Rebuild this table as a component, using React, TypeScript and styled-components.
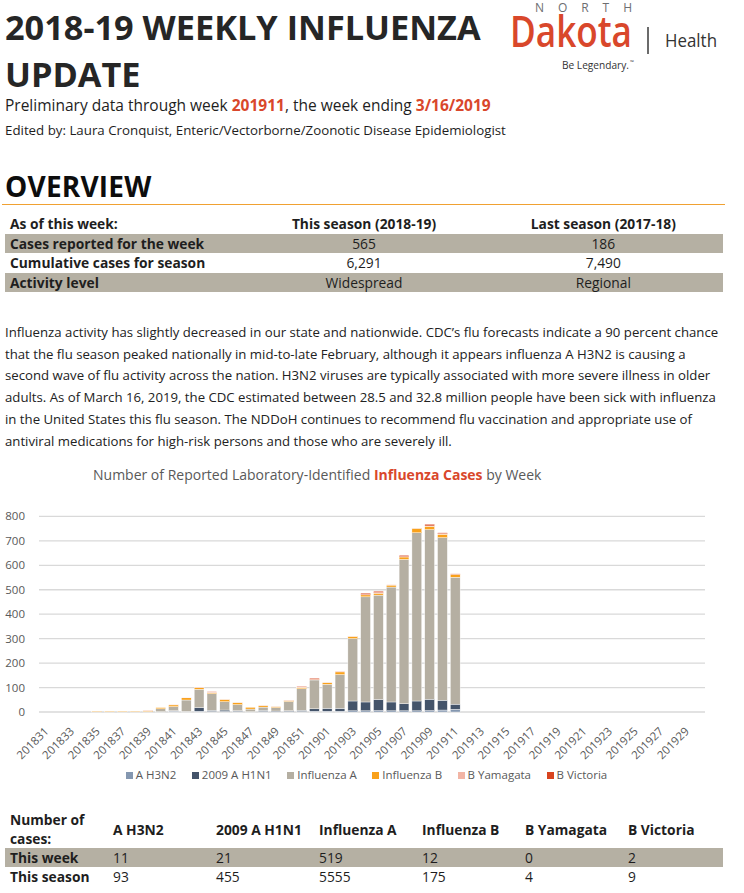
import React from 'react';
import styled, { createGlobalStyle } from 'styled-components';

const RED = '#d9472b';
const SHADE = '#b5b0a3';
const FONT = '"Open Sans", "Noto Sans", sans-serif';

const GlobalStyle = createGlobalStyle`
  html, body {
    margin: 0;
    padding: 0;
    background: #ffffff;
  }
  body {
    font-family: ${FONT};
    color: #1e1e1e;
  }
`;

const Page = styled.div`
  width: 744px;
  box-sizing: border-box;
  padding: 3px 16px 0 5px;
`;

const Header = styled.header`
  display: flex;
  justify-content: space-between;
  align-items: flex-start;
`;

const Title = styled.h1`
  margin: 0;
  width: 500px;
  font-size: 34.3px;
  line-height: 47px;
  font-weight: 700;
  color: #262626;
`;

const Subtitle = styled.div`
  font-size: 15.5px;
  line-height: 16px;
  color: #1e1e1e;
`;

const Hot = styled.span`
  color: ${RED};
  font-weight: 700;
`;

const Editor = styled.div`
  margin-top: 8px;
  font-size: 13.3px;
  line-height: 18px;
`;

const SectionTitle = styled.h2`
  margin: 30px 0 0;
  font-size: 28px;
  line-height: 34px;
  font-weight: 700;
  color: #0d0d0d;
  letter-spacing: 0.2px;
`;

const Rule = styled.div`
  margin: 1px 0 0 -3px;
  width: 723px;
  border-top: 1.5px solid #f0a132;
`;

const Table = styled.div`
  width: 718px;
  font-size: 13.8px;
`;

const OverviewTable = styled(Table)`
  margin-top: 9px;
`;

const Row = styled.div<{ $shaded?: boolean; $cols: string; $h: number }>`
  display: grid;
  grid-template-columns: ${(p) => p.$cols};
  align-items: center;
  min-height: ${(p) => p.$h}px;
  background: ${(p) => (p.$shaded ? SHADE : 'transparent')};
`;

const Cell = styled.div<{ $bold?: boolean; $center?: boolean }>`
  padding-left: ${(p) => (p.$center ? 0 : 5)}px;
  text-align: ${(p) => (p.$center ? 'center' : 'left')};
  font-weight: ${(p) => (p.$bold ? 700 : 400)};
  line-height: 19px;
`;

const Paragraph = styled.p`
  margin: 30px 0 0;
  font-size: 13.2px;
  line-height: 21.7px;
  color: #222;
`;

const ChartTitle = styled.div`
  margin-top: 13px;
  padding-left: 88px;
  font-size: 14px;
  line-height: 20px;
  color: #595959;
`;

const ChartTitleHot = styled.span`
  color: ${RED};
  font-weight: 700;
`;

const ChartSvg = styled.svg`
  display: block;
  margin-top: 14px;
  overflow: visible;
`;

const Legend = styled.div`
  margin-top: 8px;
  display: flex;
  justify-content: center;
  gap: 15.5px;
  font-size: 11.5px;
  line-height: 16px;
  color: #595959;
`;

const LegendItem = styled.div`
  display: flex;
  align-items: center;
  gap: 3px;
`;

const Swatch = styled.span<{ $color: string }>`
  width: 7px;
  height: 7px;
  background: ${(p) => p.$color};
`;

const CasesTable = styled(Table)`
  margin-top: 27px;
`;

const SERIES = [
  { name: 'A H3N2', color: '#8497b0' },
  { name: '2009 A H1N1', color: '#44546a' },
  { name: 'Influenza A', color: '#b5afa2' },
  { name: 'Influenza B', color: '#f9a11b' },
  { name: 'B Yamagata', color: '#f2b5a5' },
  { name: 'B Victoria', color: '#d8441f' },
];

// [H3N2, H1N1, Flu A, Flu B, B Yamagata, B Victoria] per week, 201831 onward
const DATA: number[][] = [
  [0, 0, 0, 0, 0, 0],
  [0, 0, 0, 0, 0, 0],
  [0, 0, 0, 0, 0, 0],
  [0, 0, 0, 0, 0, 0],
  [0, 0, 1, 2, 0, 0],
  [0, 0, 1, 2, 0, 0],
  [0, 0, 1, 2, 0, 0],
  [0, 0, 1, 2, 0, 0],
  [0, 0, 2, 3, 2, 0],
  [1, 0, 12, 5, 0, 0],
  [3, 2, 17, 7, 2, 0],
  [2, 0, 47, 9, 2, 0],
  [3, 15, 75, 7, 2, 0],
  [2, 5, 68, 4, 6, 0],
  [2, 6, 34, 9, 1, 0],
  [2, 3, 25, 8, 1, 0],
  [1, 0, 11, 7, 0, 0],
  [2, 5, 13, 6, 1, 0],
  [1, 3, 14, 4, 1, 0],
  [2, 3, 38, 4, 2, 0],
  [2, 5, 88, 6, 1, 3],
  [3, 10, 118, 2, 0, 5],
  [3, 12, 98, 7, 1, 0],
  [3, 12, 138, 11, 1, 1],
  [5, 40, 255, 9, 1, 0],
  [5, 36, 430, 8, 1, 6],
  [6, 45, 427, 8, 2, 6],
  [5, 36, 470, 8, 1, 1],
  [5, 29, 590, 10, 1, 6],
  [5, 40, 688, 18, 1, 0],
  [6, 46, 694, 14, 1, 7],
  [8, 40, 665, 14, 2, 4],
  [11, 21, 519, 12, 0, 2],
];

const WEEK_COUNT = 52;
const PLOT_LEFT = 34;
const PLOT_RIGHT = 700;
const ZERO_Y = 213;
const PER_CASE = 0.2445;
const SLOT = (PLOT_RIGHT - PLOT_LEFT) / WEEK_COUNT;
const BAR_W = 9.8;

const weekLabel = (i: number) =>
  i < 22 ? `2018${31 + i}` : `2019${String(i - 21).padStart(2, '0')}`;

function CasesChart() {
  const ticks = [0, 100, 200, 300, 400, 500, 600, 700, 800];
  return (
    <ChartSvg width={723} height={260} viewBox="0 0 723 260">
      {ticks.map((t) => {
        const y = ZERO_Y - t * PER_CASE;
        return (
          <g key={t}>
            <line x1={PLOT_LEFT} x2={PLOT_RIGHT} y1={y} y2={y} stroke="#d9d9d9" strokeWidth={1.3} />
            <text x={20} y={y + 4} textAnchor="end" fontSize={11.5} fill="#595959" fontFamily={FONT}>
              {t}
            </text>
          </g>
        );
      })}
      {DATA.map((week, i) => {
        const cx = PLOT_LEFT + (i + 0.5) * SLOT;
        let base = ZERO_Y;
        return (
          <g key={i}>
            {week.map((v, s) => {
              if (!v) return null;
              const h = v * PER_CASE;
              base -= h;
              return (
                <rect
                  key={s}
                  x={cx - BAR_W / 2}
                  y={base}
                  width={BAR_W}
                  height={h}
                  fill={SERIES[s].color}
                  stroke="#ffffff"
                  strokeWidth={0.4}
                />
              );
            })}
          </g>
        );
      })}
      {Array.from({ length: WEEK_COUNT }, (_, i) => i)
        .filter((i) => i % 2 === 0)
        .map((i) => {
          const x = PLOT_LEFT + (i + 0.5) * SLOT + 4;
          const y = 233;
          return (
            <text
              key={i}
              x={x}
              y={y}
              textAnchor="end"
              fontSize={11.5}
              fill="#595959"
              fontFamily={FONT}
              transform={`rotate(-45 ${x} ${y})`}
            >
              {weekLabel(i)}
            </text>
          );
        })}
    </ChartSvg>
  );
}

function Logo() {
  return (
    <svg width={223} height={72} viewBox="0 0 223 72">
      <text x={30} y={9} fontSize={12} fill="#6d6e71" fontFamily={FONT} textLength={97} lengthAdjust="spacing">
        NORTH
      </text>
      <text
        x={5}
        y={44}
        fontSize={44}
        fontWeight={600}
        fill={RED}
        fontFamily={FONT}
        textLength={122}
        lengthAdjust="spacingAndGlyphs"
      >
        Dakota
      </text>
      <line x1={143} x2={143} y1={24} y2={51} stroke="#3a3a3a" strokeWidth={1.5} />
      <text x={160} y={44} fontSize={19} fill="#333333" fontFamily={FONT} textLength={52} lengthAdjust="spacingAndGlyphs">
        Health
      </text>
      <text x={57} y={66} fontSize={10} fill="#333333" fontFamily={FONT} textLength={67} lengthAdjust="spacingAndGlyphs">
        Be Legendary.
      </text>
      <text x={125} y={61} fontSize={5} fill="#333333" fontFamily={FONT}>
        ™
      </text>
    </svg>
  );
}

const OVERVIEW_COLS = '1fr 1fr 1fr';
const CASES_COLS = 'repeat(6, 103px) 1fr';

export default function App() {
  return (
    <>
      <GlobalStyle />
      <Page>
        <Header>
          <Title>2018-19 WEEKLY INFLUENZA UPDATE</Title>
          <Logo />
        </Header>
        <Subtitle>
          Preliminary data through week <Hot>201911</Hot>, the week ending <Hot>3/16/2019</Hot>
        </Subtitle>
        <Editor>Edited by: Laura Cronquist, Enteric/Vectorborne/Zoonotic Disease Epidemiologist</Editor>

        <SectionTitle>OVERVIEW</SectionTitle>
        <Rule />
        <OverviewTable>
          <Row $cols={OVERVIEW_COLS} $h={19.5}>
            <Cell $bold>As of this week:</Cell>
            <Cell $bold $center>This season (2018-19)</Cell>
            <Cell $bold $center>Last season (2017-18)</Cell>
          </Row>
          <Row $cols={OVERVIEW_COLS} $h={19.5} $shaded>
            <Cell $bold>Cases reported for the week</Cell>
            <Cell $center>565</Cell>
            <Cell $center>186</Cell>
          </Row>
          <Row $cols={OVERVIEW_COLS} $h={19.5}>
            <Cell $bold>Cumulative cases for season</Cell>
            <Cell $center>6,291</Cell>
            <Cell $center>7,490</Cell>
          </Row>
          <Row $cols={OVERVIEW_COLS} $h={19.5} $shaded>
            <Cell $bold>Activity level</Cell>
            <Cell $center>Widespread</Cell>
            <Cell $center>Regional</Cell>
          </Row>
        </OverviewTable>

        <Paragraph>
          Influenza activity has slightly decreased in our state and nationwide. CDC’s flu forecasts indicate a 90
          percent chance that the flu season peaked nationally in mid-to-late February, although it appears influenza
          A H3N2 is causing a second wave of flu activity across the nation. H3N2 viruses are typically associated
          with more severe illness in older adults. As of March 16, 2019, the CDC estimated between 28.5 and 32.8
          million people have been sick with influenza in the United States this flu season. The NDDoH continues to
          recommend flu vaccination and appropriate use of antiviral medications for high-risk persons and those who
          are severely ill.
        </Paragraph>

        <ChartTitle>
          Number of Reported Laboratory-Identified <ChartTitleHot>Influenza Cases</ChartTitleHot> by Week
        </ChartTitle>
        <CasesChart />
        <Legend>
          {SERIES.map((s) => (
            <LegendItem key={s.name}>
              <Swatch $color={s.color} />
              {s.name}
            </LegendItem>
          ))}
        </Legend>

        <CasesTable>
          <Row $cols={CASES_COLS} $h={38}>
            <Cell $bold>
              Number of
              <br />
              cases:
            </Cell>
            <Cell $bold>A H3N2</Cell>
            <Cell $bold>2009 A H1N1</Cell>
            <Cell $bold>Influenza A</Cell>
            <Cell $bold>Influenza B</Cell>
            <Cell $bold>B Yamagata</Cell>
            <Cell $bold>B Victoria</Cell>
          </Row>
          <Row $cols={CASES_COLS} $h={18.5} $shaded>
            <Cell $bold>This week</Cell>
            <Cell>11</Cell>
            <Cell>21</Cell>
            <Cell>519</Cell>
            <Cell>12</Cell>
            <Cell>0</Cell>
            <Cell>2</Cell>
          </Row>
          <Row $cols={CASES_COLS} $h={18.5}>
            <Cell $bold>This season</Cell>
            <Cell>93</Cell>
            <Cell>455</Cell>
            <Cell>5555</Cell>
            <Cell>175</Cell>
            <Cell>4</Cell>
            <Cell>9</Cell>
          </Row>
        </CasesTable>
      </Page>
    </>
  );
}
